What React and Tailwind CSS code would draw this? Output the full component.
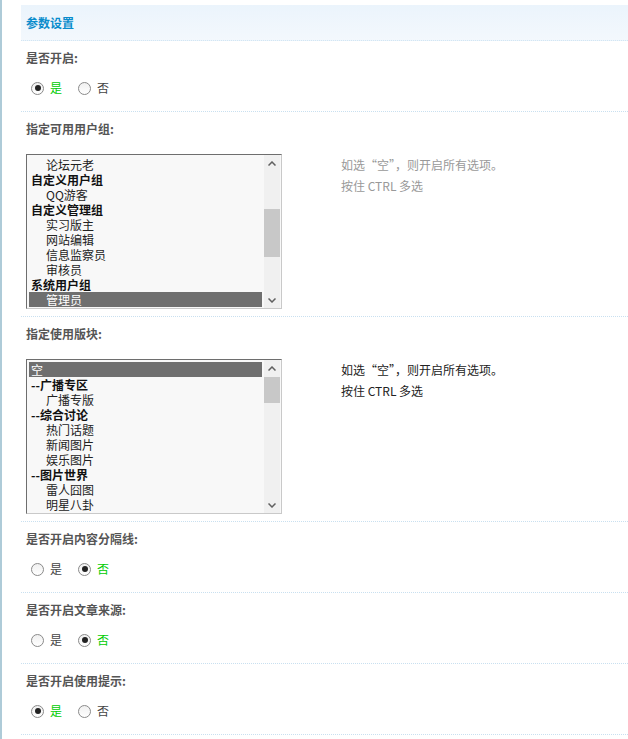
const groups = [
  { text: "论坛元老", indent: true },
  { text: "自定义用户组", bold: true },
  { text: "QQ游客", indent: true },
  { text: "自定义管理组", bold: true },
  { text: "实习版主", indent: true },
  { text: "网站编辑", indent: true },
  { text: "信息监察员", indent: true },
  { text: "审核员", indent: true },
  { text: "系统用户组", bold: true },
  { text: "管理员", indent: true, selected: true },
];

const boards = [
  { text: "空", selected: true },
  { text: "--广播专区", bold: true },
  { text: "广播专版", indent: true },
  { text: "--综合讨论", bold: true },
  { text: "热门话题", indent: true },
  { text: "新闻图片", indent: true },
  { text: "娱乐图片", indent: true },
  { text: "--图片世界", bold: true },
  { text: "雷人囧图", indent: true },
  { text: "明星八卦", indent: true },
];

function Radio({ checked, label }) {
  return (
    <label className="flex items-center">
      <span className="w-[13px] h-[13px] rounded-full border border-[#8a8a8a] bg-gradient-to-b from-[#f0f0f0] to-white flex items-center justify-center">
        {checked && <span className="w-[6px] h-[6px] rounded-full bg-[#222]" />}
      </span>
      <span className={`ml-[6px] ${checked ? "text-[#00cc00]" : "text-[#444]"}`}>{label}</span>
    </label>
  );
}

function RadioSection({ title, yes }) {
  return (
    <div className="border-b border-dotted border-[#c9e0f0] pt-[7px] pb-[11px] pl-[5px]">
      <div className="h-[20px] leading-[20px] font-bold text-[#555]">{title}</div>
      <div className="mt-[8px] h-[24px] flex items-center gap-[16px] pl-[5px]">
        <Radio checked={yes} label="是" />
        <Radio checked={!yes} label="否" />
      </div>
    </div>
  );
}

function ListBox({ items, thumbTop, thumbHeight }) {
  return (
    <div className="w-[256px] h-[155px] border border-t-[#6e6e6e] border-l-[#6e6e6e] border-r-[#c9c9c9] border-b-[#c9c9c9] bg-[#f8f8f8] flex">
      <ul className="flex-1 pl-[2px] pt-[2px] pr-[2px] overflow-hidden">
        {items.map((item) => (
          <li
            key={item.text}
            className={`h-[15px] leading-[15px] whitespace-nowrap ${item.indent ? "pl-[17px]" : "pl-[2px]"} ${
              item.bold ? "font-bold text-[#111]" : "text-[#222]"
            } ${item.selected ? "bg-[#6f6f6f] text-white" : ""}`}
          >
            {item.text}
          </li>
        ))}
      </ul>
      <div className="w-[16px] bg-[#f0f0f0] flex flex-col mr-[1px]">
        <div className="h-[16px] flex items-center justify-center">
          <svg width="8" height="5" viewBox="0 0 8 5">
            <path d="M0.5 4.5 L4 1 L7.5 4.5" fill="none" stroke="#606060" strokeWidth="1.5" />
          </svg>
        </div>
        <div className="flex-1 relative">
          <div className="absolute left-0 right-0 bg-[#c8c8c8]" style={{ top: thumbTop, height: thumbHeight }} />
        </div>
        <div className="h-[16px] flex items-center justify-center">
          <svg width="8" height="5" viewBox="0 0 8 5">
            <path d="M0.5 0.5 L4 4 L7.5 0.5" fill="none" stroke="#606060" strokeWidth="1.5" />
          </svg>
        </div>
      </div>
    </div>
  );
}

function SelectSection({ title, items, hintGrey, thumbTop, thumbHeight }) {
  return (
    <div className="border-b border-dotted border-[#c9e0f0] pt-[7px] pb-[7px] pl-[5px]">
      <div className="h-[20px] leading-[20px] font-bold text-[#555]">{title}</div>
      <div className="mt-[15px] flex">
        <ListBox items={items} thumbTop={thumbTop} thumbHeight={thumbHeight} />
        <div className={`ml-[59px] leading-[21px] ${hintGrey ? "text-[#999]" : "text-[#222]"}`}>
          <div>如选“空”，则开启所有选项。</div>
          <div>按住 CTRL 多选</div>
        </div>
      </div>
    </div>
  );
}

export default function App() {
  return (
    <div
      className="flex min-h-[739px] bg-white text-[12px]"
      style={{ fontFamily: '"Noto Sans CJK SC", "Noto Sans", sans-serif' }}
    >
      <div className="w-[2px] bg-[#aecbd8]" />
      <div className="flex-1 ml-[19px] pt-[5px]">
        <div className="h-[36px] bg-gradient-to-b from-[#ebf4fc] to-[#f3f8fd] border-b border-dotted border-[#d3e6f3] pl-[5px] flex items-center">
          <span className="font-bold text-[#0a8ccc]">参数设置</span>
        </div>
        <RadioSection title="是否开启:" yes={true} />
        <SelectSection title="指定可用用户组:" items={groups} hintGrey={true} thumbTop={38} thumbHeight={48} />
        <SelectSection title="指定使用版块:" items={boards} hintGrey={false} thumbTop={1} thumbHeight={26} />
        <RadioSection title="是否开启内容分隔线:" yes={false} />
        <RadioSection title="是否开启文章来源:" yes={false} />
        <RadioSection title="是否开启使用提示:" yes={true} />
      </div>
    </div>
  );
}
